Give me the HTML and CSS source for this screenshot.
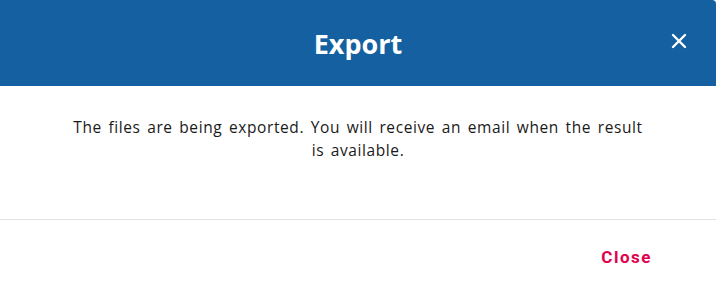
FILE: index.html
```html
<!DOCTYPE html>
<html lang="en">
<head>
    <meta charset="UTF-8">
    <meta name="viewport" content="width=device-width, initial-scale=1.0">
    <title>Export</title>
    <link rel="stylesheet" href="styles.css">
</head>
<body>
    <section class="modal">
        <header class="modal-header">
            <h2 class="modal-title">Export</h2>
            <button class="modal-x" aria-label="Close">
                <svg width="16" height="16" viewBox="0 0 16 16">
                    <path d="M2 2 L14 14 M14 2 L2 14" stroke="#fff" stroke-width="2.4" stroke-linecap="round"/>
                </svg>
            </button>
        </header>
        <div class="modal-body">
            <p>The files are being exported. You will receive an email when the result is available.</p>
        </div>
        <footer class="modal-footer">
            <button class="btn-close">Close</button>
        </footer>
    </section>
</body>
</html>
```

FILE: styles.css
```css
body{
    margin: 0;
    background-color: #fff;
    font-family: "Open Sans", sans-serif;
}
.modal{
    width: 716px;
    height: 287px;
    display: flex;
    flex-direction: column;
    overflow: hidden;
    border-top-right-radius: 4px;
}
.modal-header{
    height: 86px;
    background-color: #1460a1;
    display: flex;
    justify-content: center;
    align-items: center;
    position: relative;
}
.modal-title{
    margin: 0;
    color: #fff;
    font-size: 27px;
    font-weight: 700;
    font-family: "Open Sans", sans-serif;
}
.modal-x{
    position: absolute;
    right: 29px;
    top: 33px;
    background: none;
    border: none;
    padding: 0;
    width: 16px;
    height: 16px;
    cursor: pointer;
}
.modal-x svg{
    display: block;
}
.modal-body{
    height: 134px;
    border-bottom: 1px solid #e2e2e2;
    padding: 30px 0 0;
    box-sizing: border-box;
}
.modal-body p{
    margin: 0 auto;
    max-width: 582px;
    text-align: center;
    font-size: 15.5px;
    line-height: 23px;
    letter-spacing: 0.6px;
    word-spacing: 2px;
    color: #1a1a1a;
}
.modal-footer{
    flex: 1;
    display: flex;
    justify-content: flex-end;
    align-items: center;
    padding: 6px 64px 0 0;
}
.btn-close{
    background: none;
    border: none;
    padding: 0;
    color: #e1004c;
    font-size: 17px;
    font-weight: 700;
    letter-spacing: 1.5px;
    font-family: "Roboto", sans-serif;
    cursor: pointer;
}
```
